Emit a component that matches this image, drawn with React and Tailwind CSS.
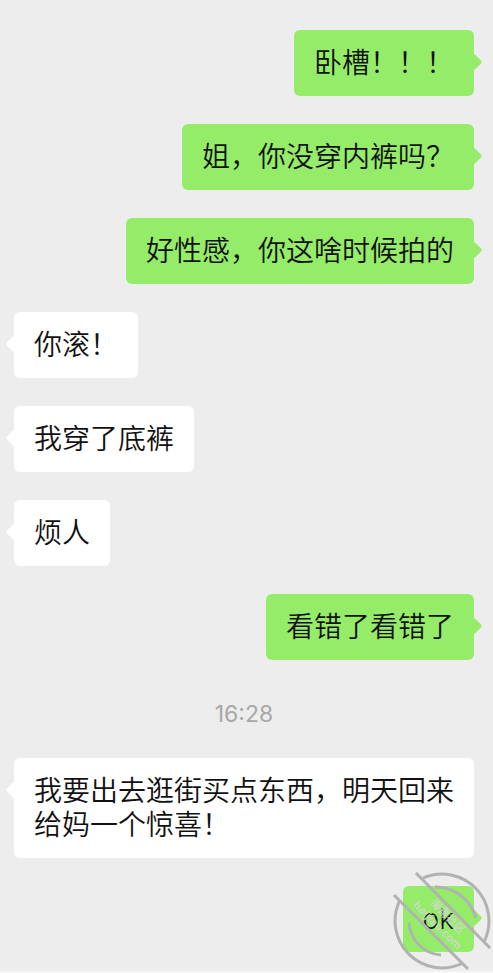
import React from 'react';

const messages = [
  { id: 1, from: 'me', text: '卧槽！！！' },
  { id: 2, from: 'me', text: '姐，你没穿内裤吗？' },
  { id: 3, from: 'me', text: '好性感，你这啥时候拍的' },
  { id: 4, from: 'them', text: '你滚！' },
  { id: 5, from: 'them', text: '我穿了底裤' },
  { id: 6, from: 'them', text: '烦人' },
  { id: 7, from: 'me', text: '看错了看错了' },
  { id: 8, type: 'time', text: '16:28' },
  { id: 9, from: 'them', text: '我要出去逛街买点东西，明天回来给妈一个惊喜！' },
  { id: 10, from: 'me', text: 'ok', stamped: true },
];

// Round stamp: broken ring, two diagonal bars and the site name between them
const Stamp = () => (
  <svg
    className="absolute -right-[18px] -top-4 h-[100px] w-[100px]"
    viewBox="0 0 100 100"
    fill="none"
    stroke="#b2b2b2"
    strokeWidth="3"
    aria-hidden="true"
  >
    <path d="M31 8 A47 47 0 0 1 92 72" />
    <path d="M8 30 A47 47 0 0 0 71 93" />
    <path d="M43 17 C63 17 79 30 84 48" />
    <path d="M17 53 C18 70 32 84 49 85" />
    <path d="M24 3 L98 78" />
    <path d="M2 25 L76 99" />
    <g
      fill="#d2d8d0"
      fillOpacity="0.85"
      stroke="none"
      fontFamily="'Noto Sans', 'Noto Sans CJK SC', sans-serif"
      fontWeight="700"
      textAnchor="middle"
    >
      <text fontSize="11" transform="translate(53 49) rotate(45)">海角社区</text>
      <text fontSize="11" transform="translate(43 58) rotate(45)">haijiao.com</text>
    </g>
  </svg>
);

const Bubble = ({ from, text, stamped }) => {
  const mine = from === 'me';

  return (
    <div className={`flex ${mine ? 'justify-end' : 'justify-start'}`}>
      <div className={`relative rounded-md px-5 py-4 ${mine ? 'bg-[#95ec69]' : 'bg-white'}`}>
        {/* Tail */}
        <span
          className={`absolute top-[26px] h-3 w-3 rotate-45 rounded-xs ${
            mine ? '-right-1.5 bg-[#95ec69]' : '-left-1.5 bg-white'
          }`}
        />
        <p className="relative text-[28px] font-[350] leading-[34px] text-[#111111]">{text}</p>
        {stamped && <Stamp />}
      </div>
    </div>
  );
};

const App = () => {
  return (
    <main className="min-h-screen overflow-hidden border-b-2 border-[#f6f6f6] bg-[#ededed] font-['Inter','Noto_Sans_CJK_SC',sans-serif]">
      <div className="flex flex-col gap-7 pt-[30px] pb-4 pl-3.5 pr-[19px]">
        {messages.map((message) =>
          message.type === 'time' ? (
            <time
              key={message.id}
              className="pt-3 pb-0.5 text-center text-[23px] leading-7 text-[#a8a8a8]"
            >
              {message.text}
            </time>
          ) : (
            <Bubble key={message.id} {...message} />
          )
        )}
      </div>
    </main>
  );
};

export default App;
